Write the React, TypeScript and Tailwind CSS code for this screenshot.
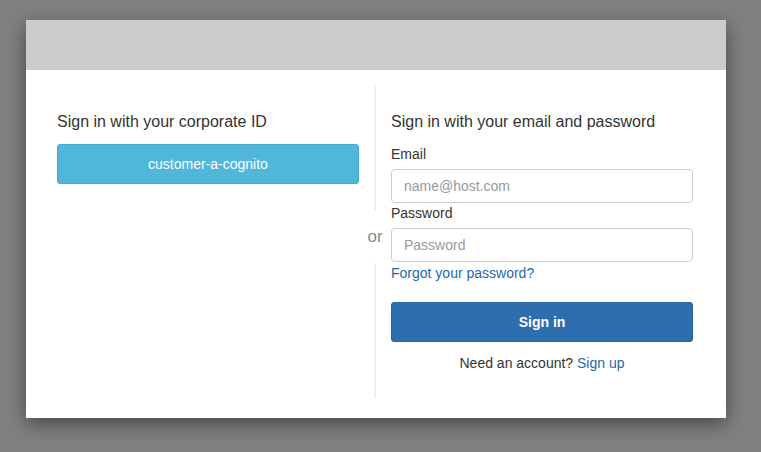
import React from 'react';

export default function App() {
    return (
        <div className="w-full h-[452px] bg-[#808080] pt-[20px] pl-[26px] font-['Liberation_Sans',Arial,sans-serif] text-[#333]">
            <div className="w-[700px] h-[398px] bg-white shadow-[0_6px_18px_rgba(0,0,0,0.45)] flex flex-col">
                <div className="h-[50px] bg-[#cccccc]" />
                <div className="flex flex-1 pt-[15px] pb-[20px]">
                    {/* corporate id */}
                    <div className="w-[302px] ml-[31px] pt-[28px]">
                        <h3 className="text-[16px] leading-[18px]">Sign in with your corporate ID</h3>
                        <button className="mt-[13px] w-full h-[40px] rounded-[3px] bg-[#50b7da] border border-[#46aad0] text-white text-[14px]">
                            customer-a-cognito
                        </button>
                    </div>

                    {/* divider */}
                    <div className="w-[32px] flex flex-col items-center">
                        <div className="w-[2px] h-[125px] bg-[#f0f0f0]" />
                        <div className="h-[53px] flex items-center text-[17px] text-[#888]">or</div>
                        <div className="w-[2px] flex-1 bg-[#f0f0f0]" />
                    </div>

                    {/* email + password */}
                    <div className="w-[302px] pt-[28px]">
                        <h3 className="text-[16px] leading-[18px]">Sign in with your email and password</h3>
                        <label className="block mt-[15px] text-[14px] leading-[16px]">Email</label>
                        <input
                            type="text"
                            placeholder="name@host.com"
                            className="mt-[7px] w-full h-[34px] px-[12px] border border-[#cccccc] rounded-[4px] text-[14px] placeholder:text-[#999] outline-none"
                        />
                        <label className="block mt-[2px] text-[14px] leading-[16px]">Password</label>
                        <input
                            type="password"
                            placeholder="Password"
                            className="mt-[7px] w-full h-[34px] px-[12px] border border-[#cccccc] rounded-[4px] text-[14px] placeholder:text-[#999] outline-none"
                        />
                        <a className="block mt-[3px] text-[14px] leading-[16px] text-[#1f68b1]">Forgot your password?</a>
                        <button className="mt-[21px] w-full h-[40px] rounded-[3px] bg-[#2d6eaf] border border-[#2a65a0] text-white text-[14px] font-bold">
                            Sign in
                        </button>
                        <p className="mt-[13px] text-center text-[14px] leading-[16px]">
                            Need an account? <a className="text-[#1f68b1]">Sign up</a>
                        </p>
                    </div>
                </div>
            </div>
        </div>
    );
}
